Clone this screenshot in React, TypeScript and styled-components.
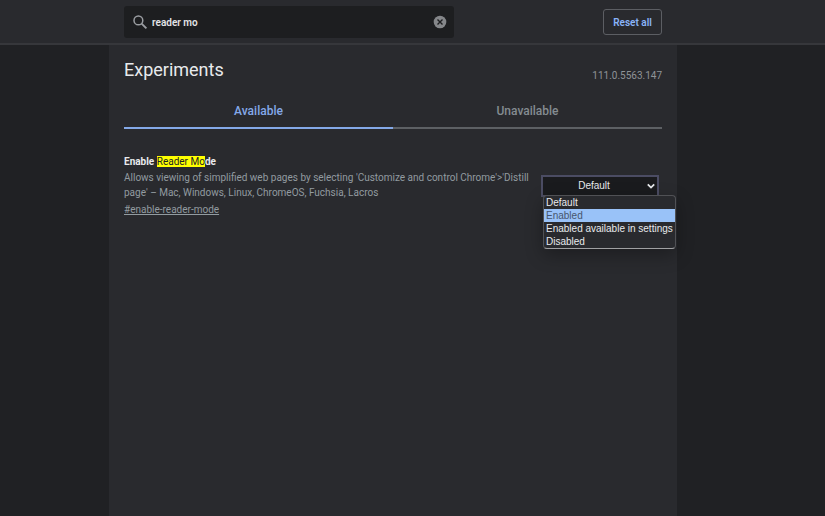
import React, { useState } from "react";
import styled, { createGlobalStyle } from "styled-components";

const GlobalStyle = createGlobalStyle`
  * { box-sizing: border-box; }
  html, body, #root { height: 100%; }
  body {
    margin: 0;
    background: #202124;
    color: #e8eaed;
    font: 10px/15px Roboto, sans-serif;
    color-scheme: dark;
  }
  button, input, select { font: inherit; }
`;

const Page = styled.div`
  min-height: 100%;
  display: flex;
  flex-direction: column;
`;

const columns = `
  display: grid;
  grid-template-columns: minmax(0, 109fr) minmax(0, 568fr) minmax(0, 148fr);
`;

const Header = styled.header`
  ${columns}
  height: 45px;
  background: #292a2e;
  border-bottom: 2px solid #36373b;
`;

const Toolbar = styled.div`
  grid-column: 2;
  display: flex;
  align-items: center;
  justify-content: space-between;
  padding: 1px 15px 0;
`;

const SearchBox = styled.label`
  display: flex;
  align-items: center;
  gap: 4px;
  width: 330px;
  height: 32px;
  padding: 0 7px 0 8px;
  border-radius: 3px;
  background: #1d1e20;
  color: #9a9da1;
`;

const SearchInput = styled.input`
  flex: 1;
  min-width: 0;
  padding: 0;
  border: 0;
  outline: 0;
  background: transparent;
  color: #e3e4e6;
  font-weight: 600;
`;

const ClearButton = styled.button`
  display: flex;
  padding: 0;
  border: 0;
  background: transparent;
  color: #85878a;
`;

const ResetButton = styled.button`
  width: 59px;
  height: 26px;
  padding: 0;
  border: 1px solid #5c5e63;
  border-radius: 3px;
  background: transparent;
  color: #8ab4f8;
  font-weight: 600;
`;

const Body = styled.div`
  ${columns}
  flex: 1;
`;

const Content = styled.main`
  grid-column: 2;
  padding: 12px 15px;
  background: #292a2e;
`;

const TitleRow = styled.div`
  display: flex;
  align-items: flex-start;
  justify-content: space-between;
`;

const Title = styled.h1`
  margin: 0;
  font-size: 18px;
  line-height: 26px;
  font-weight: 400;
`;

const Version = styled.span`
  padding-top: 11px;
  color: #8f9398;
`;

const Tabs = styled.div`
  display: flex;
  margin-top: 11px;
`;

const Tab = styled.button<{ $active: boolean }>`
  flex: 1;
  height: 35px;
  padding: 2px 0 0;
  border: 0;
  border-bottom: ${(p) => (p.$active ? "2px solid #84a9e8" : "2px solid #5d6064")};
  background: transparent;
  color: ${(p) => (p.$active ? "#84a9ea" : "#848c91")};
  font-size: 12px;
  font-weight: 500;
`;

const Experiment = styled.section`
  display: grid;
  grid-template-columns: minmax(0, 1fr) 118px;
  column-gap: 12px;
  padding: 24px 3px 0 0;
`;

const Name = styled.h2`
  margin: 0;
  font-size: 10px;
  line-height: 17px;
  font-weight: 700;
`;

const Match = styled.mark`
  background: #ffff00;
  color: #202124;
  font-weight: 400;
`;

const Description = styled.p`
  margin: 0;
  color: #929ba0;
`;

const Permalink = styled.a`
  display: inline-block;
  margin-top: 2px;
  color: #929ba0;
`;

const Picker = styled.div`
  position: relative;
  margin-top: 22px;
  height: 22px;
  font-family: "Liberation Sans", Arial, sans-serif;
`;

const Select = styled.select`
  appearance: none;
  display: block;
  width: 100%;
  height: 22px;
  padding: 0 12px 2px 0;
  border: 2px solid #4b4c63;
  border-radius: 0;
  outline: 0;
  background: #1a1b1e;
  color: #e8eaed;
  text-align: center;
  text-align-last: center;
`;

const Chevron = styled.svg`
  position: absolute;
  top: 8px;
  right: 4px;
  pointer-events: none;
`;

const Menu = styled.ul`
  position: absolute;
  top: 20px;
  left: 2px;
  margin: 0;
  padding: 0;
  list-style: none;
  border: 1px solid #505155;
  border-bottom-color: #a0a1a3;
  border-radius: 4px;
  background: #292a2e;
  box-shadow: 0 6px 18px rgba(0, 0, 0, 0.3);
  white-space: nowrap;
`;

const MenuItem = styled.li<{ $active: boolean }>`
  padding: 0 2px;
  line-height: 13px;
  background: ${(p) => (p.$active ? "#99c2f8" : "transparent")};
  color: ${(p) => (p.$active ? "#47566d" : "#e8eaed")};
`;

const options = ["Default", "Enabled", "Enabled available in settings", "Disabled"];
const tabs = ["Available", "Unavailable"];

export default function App() {
  const [query, setQuery] = useState("reader mo");
  const [tab, setTab] = useState("Available");
  const [value, setValue] = useState("Default");
  const [hovered, setHovered] = useState("Enabled");

  return (
    <Page>
      <GlobalStyle />
      <Header>
        <Toolbar>
          <SearchBox>
            <svg width="16" height="16" viewBox="0 0 16 16" fill="none" stroke="currentColor" aria-hidden="true">
              <circle cx="6.4" cy="6.4" r="4.4" strokeWidth="1.5" />
              <path d="M9.6 9.6 14.4 14.4" strokeWidth="1.9" />
            </svg>
            <SearchInput aria-label="Search flags" value={query} onChange={(e) => setQuery(e.target.value)} />
            <ClearButton type="button" aria-label="Clear search" onClick={() => setQuery("")}>
              <svg width="14" height="14" viewBox="0 0 14 14" aria-hidden="true">
                <circle cx="7" cy="7" r="6.3" fill="currentColor" />
                <path d="m4.5 4.5 5 5m0-5-5 5" stroke="#1d1e20" strokeWidth="1.4" />
              </svg>
            </ClearButton>
          </SearchBox>
          <ResetButton type="button">Reset all</ResetButton>
        </Toolbar>
      </Header>
      <Body>
        <Content>
          <TitleRow>
            <Title>Experiments</Title>
            <Version>111.0.5563.147</Version>
          </TitleRow>
          <Tabs role="tablist">
            {tabs.map((name) => (
              <Tab key={name} type="button" role="tab" aria-selected={tab === name} $active={tab === name} onClick={() => setTab(name)}>
                {name}
              </Tab>
            ))}
          </Tabs>
          <Experiment id="enable-reader-mode">
            <div>
              <Name>
                Enable <Match>Reader Mo</Match>de
              </Name>
              <Description>
                Allows viewing of simplified web pages by selecting 'Customize and control Chrome'&gt;'Distill page' – Mac,
                Windows, Linux, ChromeOS, Fuchsia, Lacros
              </Description>
              <Permalink href="#enable-reader-mode">#enable-reader-mode</Permalink>
            </div>
            <Picker>
              <Select aria-label="Enable Reader Mode" value={value} onChange={(e) => setValue(e.target.value)}>
                {options.map((o) => (
                  <option key={o}>{o}</option>
                ))}
              </Select>
              <Chevron width="8" height="7" viewBox="0 0 8 7" fill="none" stroke="#e8eaed" strokeWidth="1.8" aria-hidden="true">
                <path d="m.8 1.4 3.2 3.2 3.2-3.2" />
              </Chevron>
              <Menu role="listbox" aria-label="Reader Mode options">
                {options.map((o) => (
                  <MenuItem
                    key={o}
                    role="option"
                    aria-selected={o === hovered}
                    $active={o === hovered}
                    onMouseEnter={() => setHovered(o)}
                    onClick={() => setValue(o)}
                  >
                    {o}
                  </MenuItem>
                ))}
              </Menu>
            </Picker>
          </Experiment>
        </Content>
      </Body>
    </Page>
  );
}
